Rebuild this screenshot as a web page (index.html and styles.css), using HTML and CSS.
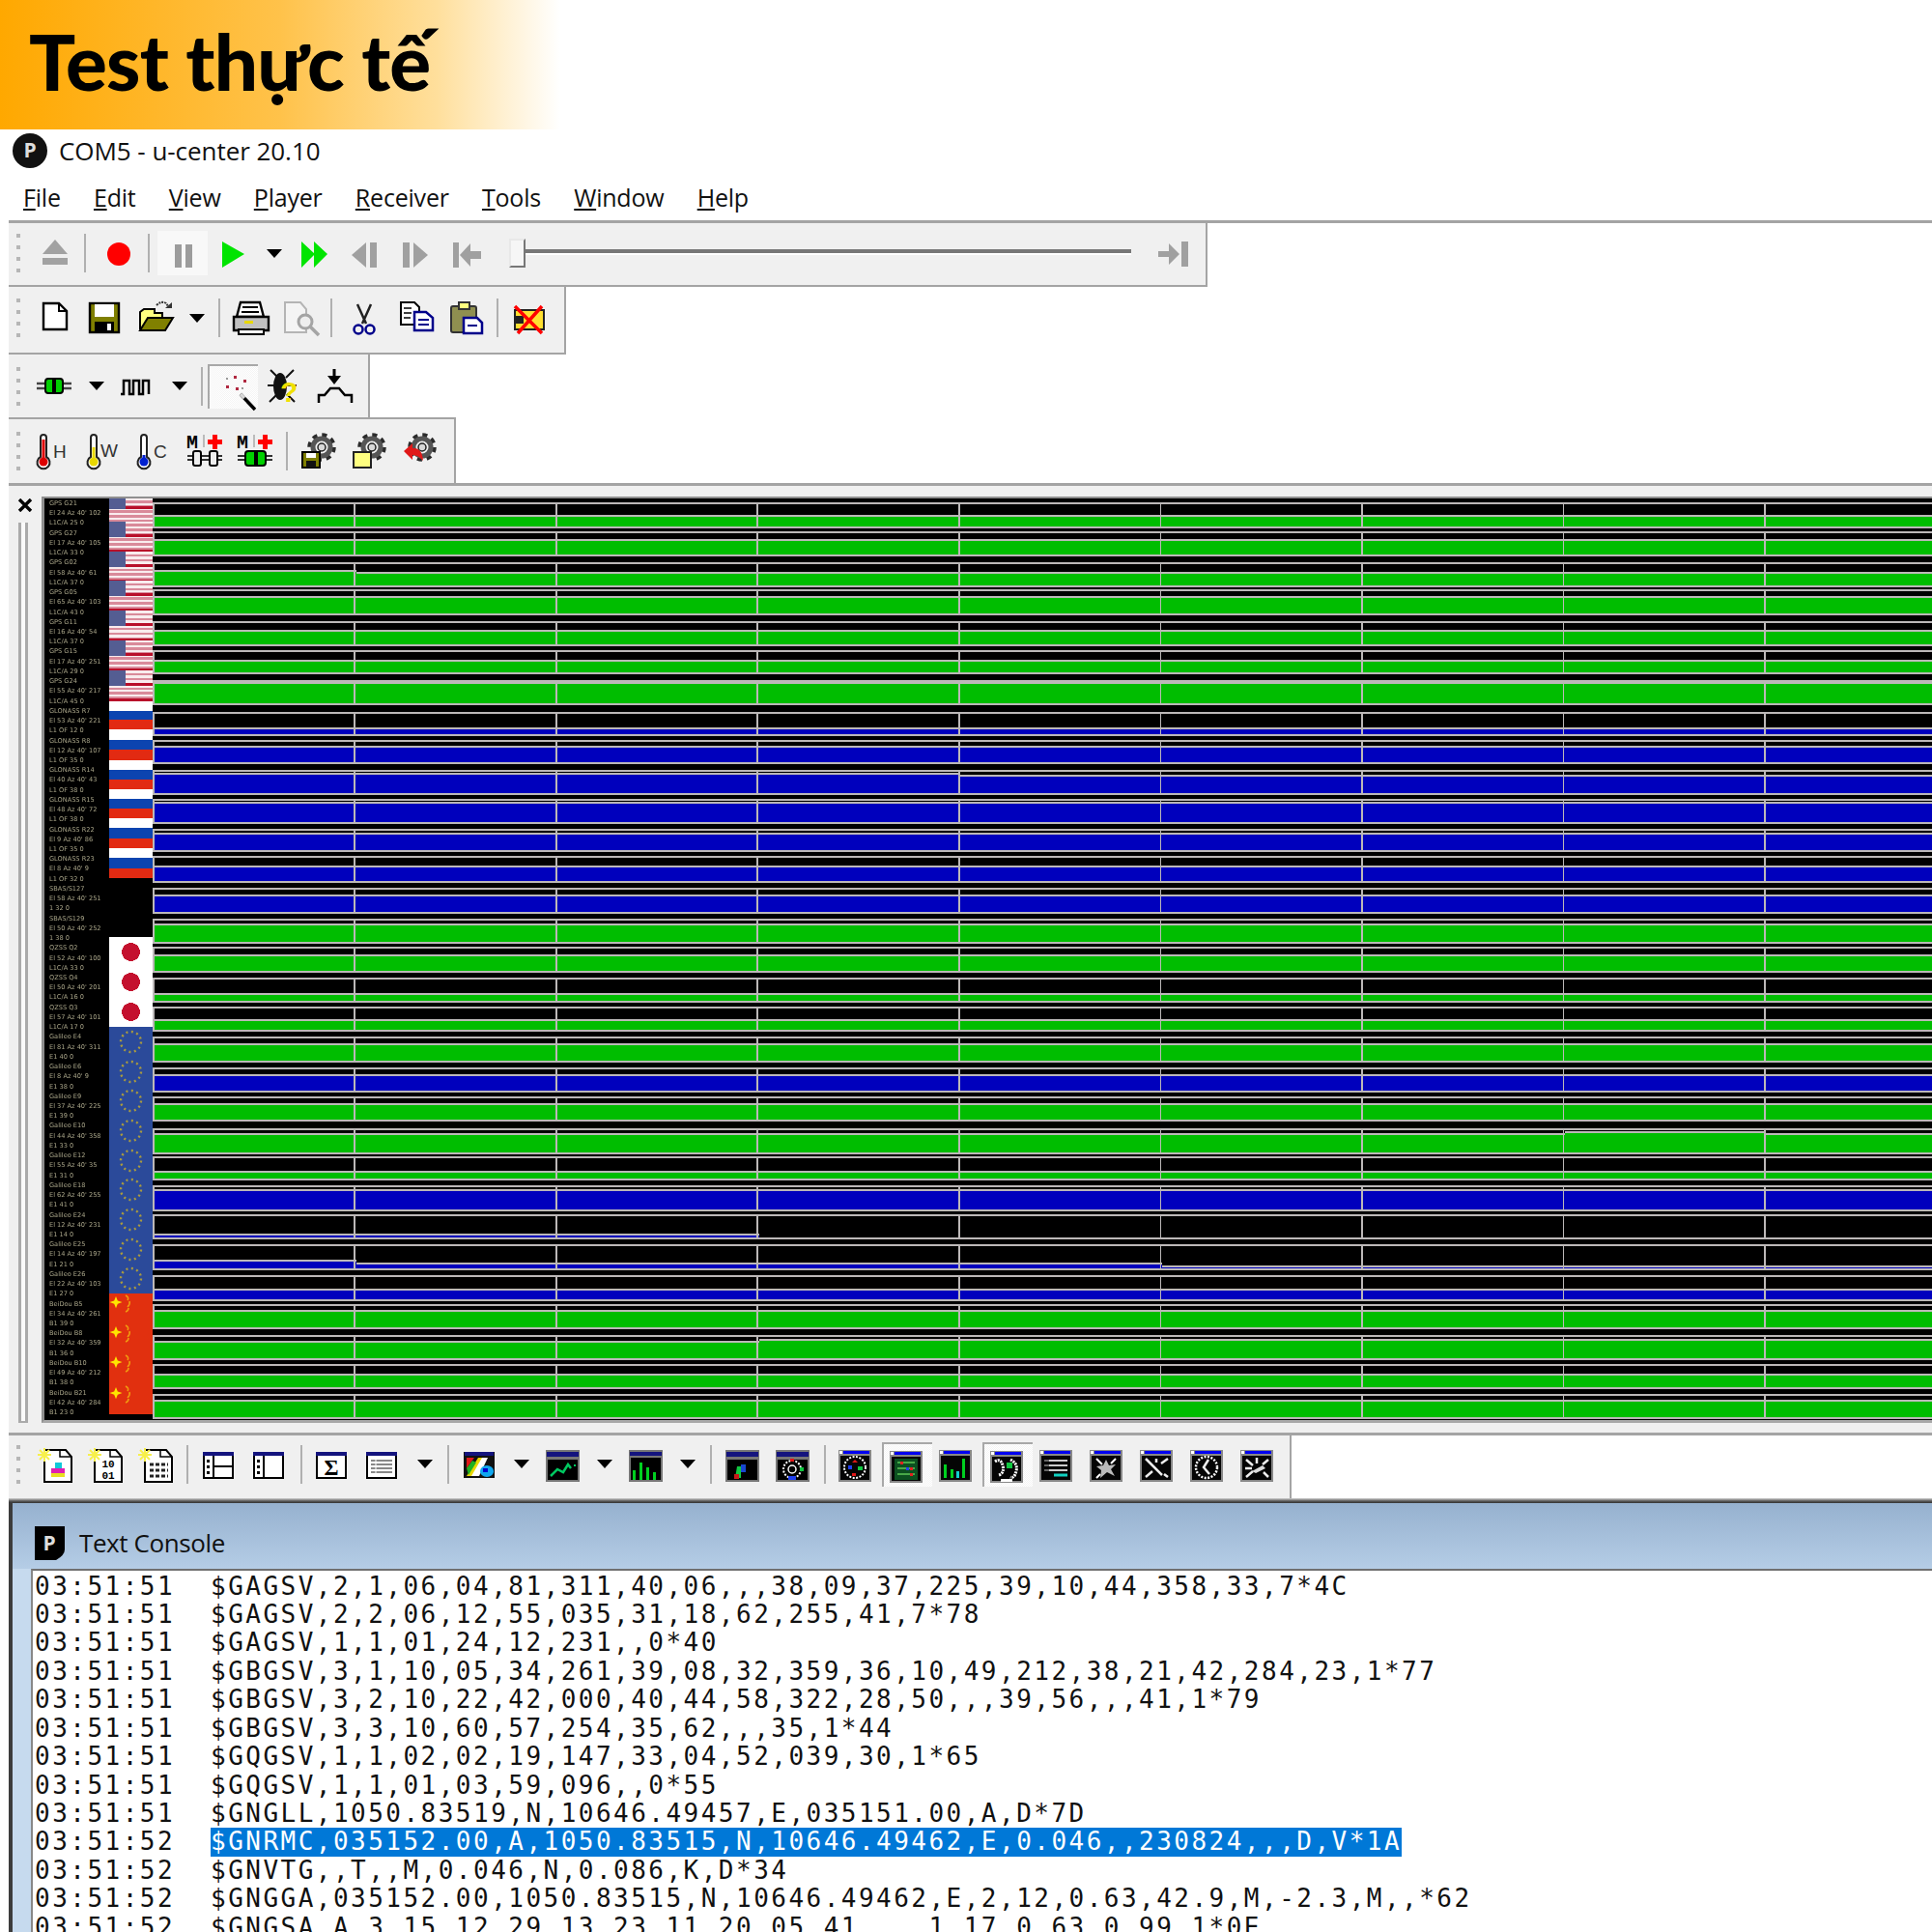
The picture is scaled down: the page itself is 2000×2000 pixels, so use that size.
FILE: index.html
```html
<!DOCTYPE html>
<html lang="vi">
<head>
<meta charset="utf-8">
<title>Test thực tế</title>
<link rel="stylesheet" href="styles.css">
</head>
<body>
<svg class="defs" aria-hidden="true">
  <defs>
    <symbol id="gear" viewBox="-16 -16 32 32" overflow="visible">
      <circle r="12.5" fill="none" stroke="#2b2b2b" stroke-width="4.5" stroke-dasharray="5 4.8"/>
      <circle r="9" fill="none" stroke="#555" stroke-width="5"/>
      <circle r="4" fill="#d8d8d8" stroke="#222" stroke-width="1.5"/>
    </symbol>
    <symbol id="spark" viewBox="0 0 52 52" overflow="visible">
      <path d="M15 11L37 11 43 18V44H15Z" fill="#fff" stroke="#000" stroke-width="2"/>
      <path d="M31 11v7h12" fill="none" stroke="#000" stroke-width="1.5"/>
      <path d="M8 16h14M15 9v14M10 11l10 10M20 11L10 21" stroke="#f7f04a" stroke-width="2"/>
    </symbol>
    <symbol id="navy" viewBox="0 0 52 52" overflow="visible">
      <rect x="8" y="11" width="35" height="33" fill="#777"/>
      <rect x="9" y="13" width="33" height="5" fill="#14147e"/>
      <rect x="10" y="21" width="31" height="21" fill="#000"/>
    </symbol>
    <symbol id="blue" viewBox="0 0 52 52" overflow="visible">
      <rect x="7" y="11" width="34" height="33" fill="#888"/>
      <rect x="8" y="12" width="3" height="3" fill="#fff"/>
      <rect x="12" y="12" width="27" height="3" fill="#0000f0"/>
      <rect x="9" y="17" width="30" height="25" fill="#050505"/>
    </symbol>
    <symbol id="eu" viewBox="0 0 45 31">
      <circle cx="22.5" cy="15.5" r="10.5" fill="none" stroke="#a89a40" stroke-width="2.4" stroke-dasharray="2 3.5"/>
    </symbol>
    <symbol id="cn" viewBox="0 0 45 31">
      <path d="M7 3l1.8 4.6L13.500 9 8.800 10.700 7 15.300 5.200 10.700 .5 9 5.200 7.600z" fill="#ffe600"/>
      <path d="M17 2q4 2 2 5M21 8q1 3-2 6M20 15q0 3-3 4" fill="none" stroke="#f09a10" stroke-width="1.600"/>
    </symbol>
  </defs>
</svg>

<div class="page">
  <header class="banner"><h1>Test thực tế</h1></header>

  <div class="titlebar">
    <svg class="app-logo" viewBox="0 0 36 36"><circle cx="18" cy="18" r="18" fill="#111"/><text x="18" y="25" class="logo-p">P</text></svg>
    <span>COM5 - u-center 20.10</span>
  </div>

  <nav class="menu">
    <span><u>F</u>ile</span><span><u>E</u>dit</span><span><u>V</u>iew</span><span><u>P</u>layer</span><span><u>R</u>eceiver</span><span><u>T</u>ools</span><span><u>W</u>indow</span><span><u>H</u>elp</span>
  </nav>
  <div class="rule"></div>

  <!-- player toolbar -->
  <div class="bar t1">
    <i class="grip"></i>
    <span class="btn"><svg viewBox="0 0 52 52"><path d="M26 12L39 27H13Z" fill="#a2a2a2"/><rect x="13" y="31" width="26" height="7" fill="#a2a2a2"/></svg></span>
    <i class="sep"></i>
    <span class="btn"><svg viewBox="0 0 52 52"><circle cx="26" cy="27" r="12" fill="#f00"/></svg></span>
    <i class="sep"></i>
    <span class="btn soft"><svg viewBox="0 0 52 52"><rect x="18" y="17" width="7" height="24" fill="#9c9c9c"/><rect x="29" y="17" width="7" height="24" fill="#9c9c9c"/></svg></span>
    <span class="btn"><svg viewBox="0 0 52 52"><path d="M15 14L38 27 15 41Z" fill="#00e400"/></svg></span>
    <i class="drop"></i>
    <span class="btn"><svg viewBox="0 0 52 52"><path d="M11 14L25 27 11 41ZM24 14L38 27 24 41Z" fill="#00e400"/></svg></span>
    <span class="btn"><svg viewBox="0 0 52 52"><path d="M26 15L11 28 26 41Z" fill="#a0a0a0"/><rect x="30" y="15" width="7" height="26" fill="#a0a0a0"/></svg></span>
    <span class="btn"><svg viewBox="0 0 52 52"><rect x="12" y="15" width="7" height="26" fill="#a0a0a0"/><path d="M23 15L38 28 23 41Z" fill="#a0a0a0"/></svg></span>
    <span class="btn"><svg viewBox="0 0 52 52"><rect x="12" y="15" width="6" height="26" fill="#a0a0a0"/><path d="M19 28L30 16V24H41V32H30V40Z" fill="#a0a0a0"/></svg></span>
    <div class="slider"><i class="thumb"></i><i class="track"></i></div>
    <span class="btn"><svg viewBox="0 0 52 52"><path d="M11 24H22V16L33 27 22 38V30H11Z" fill="#a0a0a0"/><rect x="35" y="14" width="7" height="26" fill="#a0a0a0"/></svg></span>
  </div>

  <!-- file toolbar -->
  <div class="bar t2">
    <i class="grip"></i>
    <span class="btn"><svg viewBox="0 0 52 52"><path d="M14 11H30L38 19V38H14Z" fill="#fff" stroke="#000" stroke-width="2.400"/><path d="M30 11V19H38" fill="none" stroke="#000" stroke-width="2"/></svg></span>
    <span class="btn"><svg viewBox="0 0 52 52"><rect x="10" y="11" width="30" height="30" fill="#7f7f00" stroke="#000" stroke-width="2.400"/><rect x="15" y="12" width="20" height="13" fill="#fff"/><rect x="15" y="30" width="20" height="11" fill="#000"/><rect x="28" y="32" width="4" height="7" fill="#fff"/></svg></span>
    <span class="btn"><svg viewBox="0 0 52 52"><path d="M10 38V20L14 17H25V21H33V27" fill="#ffff80" stroke="#000" stroke-width="2"/><path d="M10 39L18 26H44L36 39Z" fill="#808000" stroke="#000" stroke-width="2"/><path d="M27 13Q32 8 37 11L39 14" fill="none" stroke="#333" stroke-width="2" stroke-dasharray="2 1"/><path d="M36 16H43V10Z" fill="#333"/></svg></span>
    <i class="drop"></i>
    <i class="sep"></i>
    <span class="btn"><svg viewBox="0 0 52 52"><path d="M16 10H36L40 25H12Z" fill="#fff" stroke="#000" stroke-width="2.400"/><path d="M18 15H34M17 20H35" stroke="#000" stroke-width="2"/><path d="M9 25H45V39H9Z" fill="#c0c0c0" stroke="#000" stroke-width="2.400"/><rect x="14" y="38" width="26" height="5" fill="#fff" stroke="#000" stroke-width="2"/><rect x="20" y="29" width="9" height="3" fill="#e8d800"/></svg></span>
    <span class="btn"><svg viewBox="0 0 52 52"><path d="M10 10H26L32 17V41H10Z" fill="#f4f4f4" stroke="#b4b4b4" stroke-width="2"/><circle cx="31" cy="30" r="7" fill="#eee" stroke="#a4a4a4" stroke-width="3"/><path d="M36 35L45 44" stroke="#a4a4a4" stroke-width="3.500"/></svg></span>
    <i class="sep"></i>
    <span class="btn wide"><svg viewBox="0 0 52 52"><path d="M19 12L28 32M33 12L24 32" stroke="#222" stroke-width="2.500"/><circle cx="20" cy="38" r="4.500" fill="none" stroke="#00008a" stroke-width="2.500"/><circle cx="32" cy="38" r="4.500" fill="none" stroke="#00008a" stroke-width="2.500"/></svg></span>
    <span class="btn"><svg viewBox="0 0 52 52"><path d="M10 10H24L29 15V33H10Z" fill="#fff" stroke="#000" stroke-width="2"/><path d="M13 16H21M13 21H21M13 26H20" stroke="#000" stroke-width="1.500"/><path d="M24 20H36L43 26V39H24Z" fill="#fff" stroke="#00008a" stroke-width="2.500"/><path d="M28 28H39M28 33H39" stroke="#00008a" stroke-width="2"/></svg></span>
    <span class="btn"><svg viewBox="0 0 52 52"><rect x="10" y="14" width="26" height="27" rx="2" fill="#8f8f50" stroke="#333" stroke-width="2"/><rect x="18" y="10" width="11" height="7" fill="#ffff80" stroke="#333" stroke-width="2"/><path d="M23 26H37L42 31V42H23Z" fill="#fff" stroke="#00008a" stroke-width="2.500"/><path d="M27 34H37" stroke="#00008a" stroke-width="2"/></svg></span>
    <i class="sep"></i>
    <span class="btn"><svg viewBox="0 0 52 52"><rect x="12" y="18" width="30" height="20" fill="#ffe030" stroke="#222" stroke-width="2"/><rect x="12" y="24" width="9" height="8" fill="#222"/><path d="M12 14L40 42M40 14L15 42" stroke="#f00" stroke-width="3.500"/></svg></span>
  </div>

  <!-- connection toolbar -->
  <div class="bar t3">
    <i class="grip"></i>
    <span class="btn"><svg viewBox="0 0 52 52"><path d="M7 23H43M7 28H43" stroke="#444" stroke-width="2.500"/><rect x="16" y="18" width="18" height="15" rx="3" fill="#00d000" stroke="#000" stroke-width="2"/><rect x="23" y="18" width="4" height="15"/></svg></span>
    <i class="drop"></i>
    <span class="btn"><svg viewBox="0 0 52 52"><path d="M8 34H11V20H17V34H21V20H27V34H31V20H37V34" fill="none" stroke="#000" stroke-width="2.500"/></svg></span>
    <i class="drop"></i>
    <i class="sep"></i>
    <span class="btn on"><svg viewBox="0 0 52 52"><path d="M33 33L48 49" stroke="#000" stroke-width="3.500"/><path d="M33 33L37 37" stroke="#d8d8d8" stroke-width="3.500"/><path d="M26 14h3v3h-3zM36 18h3v3h-3zM18 24h3v3h-3zM28 26h3v3h-3z" fill="#b02840"/><path d="M18 16h2v2h-2zM34 26h2v2h-2z" fill="#999"/></svg></span>
    <span class="btn"><svg viewBox="0 0 52 52"><path d="M13 9L21 17M37 9L29 17M10 25H40M12 42L20 34M38 42L30 34" stroke="#111" stroke-width="2"/><ellipse cx="23" cy="26" rx="7" ry="14" fill="#111"/><text x="23" y="42" class="bug-q">?</text></svg></span>
    <span class="btn"><svg viewBox="0 0 52 52"><path d="M27 8V18" stroke="#000" stroke-width="3"/><path d="M20 15L27 24 34 15Z"/><path d="M11 43V35H17L23 28H32L38 35H45V43" fill="none" stroke="#000" stroke-width="2.500"/></svg></span>
  </div>

  <!-- monitor toolbar -->
  <div class="bar t4">
    <i class="grip"></i>
    <span class="btn"><svg viewBox="0 0 52 52"><path d="M11 12A3 3 0 0 1 17 12V32A6.500 6.500 0 1 1 11 32Z" fill="#fff" stroke="#222" stroke-width="2"/><rect x="12.500" y="14" width="3" height="20" fill="#d00"/><circle cx="14" cy="37" r="4.500" fill="#d00"/><text x="24" y="33" class="th">H</text></svg></span>
    <span class="btn"><svg viewBox="0 0 52 52"><path d="M11 12A3 3 0 0 1 17 12V32A6.500 6.500 0 1 1 11 32Z" fill="#fff" stroke="#222" stroke-width="2"/><rect x="12.500" y="22" width="3" height="12" fill="#e8d800"/><circle cx="14" cy="37" r="4.500" fill="#e8d800"/><text x="21" y="32" class="th">W</text></svg></span>
    <span class="btn"><svg viewBox="0 0 52 52"><path d="M11 12A3 3 0 0 1 17 12V32A6.500 6.500 0 1 1 11 32Z" fill="#fff" stroke="#222" stroke-width="2"/><rect x="12.500" y="30" width="3" height="4" fill="#0020d0"/><circle cx="14" cy="37" r="4.500" fill="#0020d0"/><text x="24" y="33" class="th">C</text></svg></span>
    <span class="btn"><svg viewBox="0 0 52 52"><text x="6" y="23" class="mm">M</text><path d="M24 9V22" stroke="#aaa" stroke-width="1.500"/><path d="M33 9h5v5h5v5h-5v5h-5v-5h-5v-5h5z" fill="#f00"/><path d="M7 31H43M7 35H43" stroke="#333" stroke-width="2"/><rect x="13" y="26" width="8" height="15" rx="2" fill="#eee" stroke="#000" stroke-width="2"/><rect x="30" y="26" width="8" height="15" rx="2" fill="#eee" stroke="#000" stroke-width="2"/></svg></span>
    <span class="btn"><svg viewBox="0 0 52 52"><text x="6" y="23" class="mm">M</text><path d="M24 9V22" stroke="#aaa" stroke-width="1.500"/><path d="M33 9h5v5h5v5h-5v5h-5v-5h-5v-5h5z" fill="#f00"/><path d="M7 31H43M7 35H43" stroke="#333" stroke-width="2"/><rect x="15" y="26" width="21" height="15" rx="3" fill="#00d000" stroke="#000" stroke-width="2"/><rect x="24" y="26" width="4" height="15"/></svg></span>
    <i class="sep"></i>
    <span class="btn"><svg viewBox="0 0 52 52"><use href="#gear" x="14" y="6" width="32" height="32"/><rect x="10" y="27" width="18" height="16" fill="#7f7f00" stroke="#000" stroke-width="2"/><rect x="14" y="36" width="10" height="7" fill="#111"/><rect x="14" y="28" width="10" height="5" fill="#fff"/></svg></span>
    <span class="btn"><svg viewBox="0 0 52 52"><use href="#gear" x="14" y="6" width="32" height="32"/><rect x="11" y="27" width="18" height="16" fill="#ffff80" stroke="#222" stroke-width="2"/></svg></span>
    <span class="btn"><svg viewBox="0 0 52 52"><use href="#gear" x="14" y="6" width="32" height="32"/><path d="M11 26L20 18V23Q30 22 31 36Q26 30 20 30V35Z" fill="#e01818"/></svg></span>
  </div>
  <div class="rule"></div>

  <!-- satellite chart -->
  <section class="chart-pane">
    <div class="pane-side">
      <svg class="close-x" viewBox="0 0 16 14"><path d="M2 1L14 13M14 1L2 13" stroke="#000" stroke-width="3.400"/></svg>
      <div class="pane-handle"></div>
    </div>
    <div class="chart">
      <div class="labels">
        <div class="lb"><p>GPS G21</p><p>El 24 Az 40' 102</p><p>L1C/A 25 0</p></div>
        <div class="lb"><p>GPS G27</p><p>El 17 Az 40' 105</p><p>L1C/A 33 0</p></div>
        <div class="lb"><p>GPS G02</p><p>El 58 Az 40' 61</p><p>L1C/A 37 0</p></div>
        <div class="lb"><p>GPS G05</p><p>El 65 Az 40' 103</p><p>L1C/A 43 0</p></div>
        <div class="lb"><p>GPS G11</p><p>El 16 Az 40' 54</p><p>L1C/A 37 0</p></div>
        <div class="lb"><p>GPS G15</p><p>El 17 Az 40' 251</p><p>L1C/A 29 0</p></div>
        <div class="lb"><p>GPS G24</p><p>El 55 Az 40' 217</p><p>L1C/A 45 0</p></div>
        <div class="lb"><p>GLONASS R7</p><p>El 53 Az 40' 221</p><p>L1 OF 12 0</p></div>
        <div class="lb"><p>GLONASS R8</p><p>El 12 Az 40' 107</p><p>L1 OF 35 0</p></div>
        <div class="lb"><p>GLONASS R14</p><p>El 40 Az 40' 43</p><p>L1 OF 38 0</p></div>
        <div class="lb"><p>GLONASS R15</p><p>El 48 Az 40' 72</p><p>L1 OF 38 0</p></div>
        <div class="lb"><p>GLONASS R22</p><p>El 9 Az 40' 86</p><p>L1 OF 35 0</p></div>
        <div class="lb"><p>GLONASS R23</p><p>El 8 Az 40' 9</p><p>L1 OF 32 0</p></div>
        <div class="lb"><p>SBAS/S127</p><p>El 58 Az 40' 251</p><p>1 32 0</p></div>
        <div class="lb"><p>SBAS/S129</p><p>El 50 Az 40' 252</p><p>1 38 0</p></div>
        <div class="lb"><p>QZSS Q2</p><p>El 52 Az 40' 100</p><p>L1C/A 33 0</p></div>
        <div class="lb"><p>QZSS Q4</p><p>El 50 Az 40' 201</p><p>L1C/A 16 0</p></div>
        <div class="lb"><p>QZSS Q3</p><p>El 57 Az 40' 101</p><p>L1C/A 17 0</p></div>
        <div class="lb"><p>Galileo E4</p><p>El 81 Az 40' 311</p><p>E1 40 0</p></div>
        <div class="lb"><p>Galileo E6</p><p>El 8 Az 40' 9</p><p>E1 38 0</p></div>
        <div class="lb"><p>Galileo E9</p><p>El 37 Az 40' 225</p><p>E1 39 0</p></div>
        <div class="lb"><p>Galileo E10</p><p>El 44 Az 40' 358</p><p>E1 33 0</p></div>
        <div class="lb"><p>Galileo E12</p><p>El 55 Az 40' 35</p><p>E1 31 0</p></div>
        <div class="lb"><p>Galileo E18</p><p>El 62 Az 40' 255</p><p>E1 41 0</p></div>
        <div class="lb"><p>Galileo E24</p><p>El 12 Az 40' 231</p><p>E1 14 0</p></div>
        <div class="lb"><p>Galileo E25</p><p>El 14 Az 40' 197</p><p>E1 21 0</p></div>
        <div class="lb"><p>Galileo E26</p><p>El 22 Az 40' 103</p><p>E1 27 0</p></div>
        <div class="lb"><p>BeiDou B5</p><p>El 34 Az 40' 261</p><p>B1 39 0</p></div>
        <div class="lb"><p>BeiDou B8</p><p>El 32 Az 40' 359</p><p>B1 36 0</p></div>
        <div class="lb"><p>BeiDou B10</p><p>El 49 Az 40' 212</p><p>B1 38 0</p></div>
        <div class="lb"><p>BeiDou B21</p><p>El 42 Az 40' 284</p><p>B1 23 0</p></div>
      </div>

      <div class="flags">
        <div class="fl us us-first" style="height:24px"></div>
        <div class="fl us" style="height:31px"></div>
        <div class="fl us" style="height:30px"></div>
        <div class="fl us" style="height:31px"></div>
        <div class="fl us" style="height:31px"></div>
        <div class="fl us" style="height:31px"></div>
        <div class="fl us" style="height:32px"></div>
        <div class="fl ru" style="height:29px"></div>
        <div class="fl ru" style="height:32px"></div>
        <div class="fl ru" style="height:30px"></div>
        <div class="fl ru" style="height:30px"></div>
        <div class="fl ru" style="height:31px"></div>
        <div class="fl ru" style="height:31px"></div>
        <div class="fl" style="height:61px"></div>
        <div class="fl jp" style="height:31px"></div>
        <div class="fl jp" style="height:31px"></div>
        <div class="fl jp" style="height:31px"></div>
        <div class="fl eu"><svg><use href="#eu"/></svg></div>
        <div class="fl eu"><svg><use href="#eu"/></svg></div>
        <div class="fl eu"><svg><use href="#eu"/></svg></div>
        <div class="fl eu"><svg><use href="#eu"/></svg></div>
        <div class="fl eu"><svg><use href="#eu"/></svg></div>
        <div class="fl eu"><svg><use href="#eu"/></svg></div>
        <div class="fl eu"><svg><use href="#eu"/></svg></div>
        <div class="fl eu"><svg><use href="#eu"/></svg></div>
        <div class="fl eu"><svg><use href="#eu"/></svg></div>
        <div class="fl cn"><svg><use href="#cn"/></svg></div>
        <div class="fl cn"><svg><use href="#cn"/></svg></div>
        <div class="fl cn"><svg><use href="#cn"/></svg></div>
        <div class="fl cn"><svg><use href="#cn"/></svg></div>
      </div>

      <div class="bars">
        <div class="sv" style="margin-top:4px;height:27px"><b class="run g" style="--s:11px"></b></div>
        <div class="sv" style="margin-top:3px;height:26px"><b class="run g" style="--s:6px"></b></div>
        <div class="sv" style="margin-top:6px;height:26px"><b class="run g" style="--s:6px"></b><b class="run g" style="--s:8px"></b></div>
        <div class="sv" style="margin-top:2px;height:27px"><b class="run g" style="--s:5px"></b></div>
        <div class="sv" style="margin-top:6px;height:26px"><b class="run g" style="--s:7px"></b></div>
        <div class="sv" style="margin-top:4px;height:25px"><b class="run g" style="--s:8px"></b></div>
        <div class="sv" style="margin-top:6px;height:26px"><b class="run g" style="--s:0px"></b></div>
        <div class="sv" style="margin-top:7px;height:25px"><b class="run b" style="--s:14px"></b></div>
        <div class="sv" style="margin-top:4px;height:25px"><b class="run b" style="--s:4px"></b></div>
        <div class="sv" style="margin-top:6px;height:26px"><b class="run b" style="--n:4;--s:1px"></b><b class="run b" style="--s:3px"></b></div>
        <div class="sv" style="margin-top:4px;height:26px"><b class="run b" style="--s:1px"></b></div>
        <div class="sv" style="margin-top:5px;height:24px"><b class="run b" style="--s:2px"></b></div>
        <div class="sv" style="margin-top:4px;height:28px"><b class="run b" style="--s:8px"></b></div>
        <div class="sv" style="margin-top:5px;height:27px"><b class="run b" style="--s:5px"></b></div>
        <div class="sv" style="margin-top:5px;height:26px"><b class="run g" style="--s:3px"></b></div>
        <div class="sv" style="margin-top:3px;height:27px"><b class="run g" style="--s:6px"></b></div>
        <div class="sv" style="margin-top:5px;height:26px"><b class="run g" style="--s:14px"></b></div>
        <div class="sv" style="margin-top:4px;height:26px"><b class="run g" style="--s:11px"></b></div>
        <div class="sv" style="margin-top:5px;height:27px"><b class="run g" style="--s:5px"></b></div>
        <div class="sv" style="margin-top:5px;height:26px"><b class="run b" style="--s:5px"></b></div>
        <div class="sv" style="margin-top:4px;height:26px"><b class="run g" style="--s:5px"></b></div>
        <div class="sv" style="margin-top:7px;height:27px"><b class="run g" style="--n:7;--s:3px"></b><b class="run g" style="--s:1px"></b><b class="run g" style="--s:3px"></b></div>
        <div class="sv" style="margin-top:2px;height:25px"><b class="run g" style="--s:13px"></b></div>
        <div class="sv" style="margin-top:5px;height:27px"><b class="run b" style="--s:2px"></b></div>
        <div class="sv" style="margin-top:3px;height:26px"><b class="run b" style="--n:3;--s:18px"></b><b class="run k"></b></div>
        <div class="sv" style="margin-top:5px;height:27px"><b class="run b" style="--s:14px"></b><b class="run b" style="--n:4;--s:17px"></b><b class="run b" style="--s:20px"></b></div>
        <div class="sv" style="margin-top:5px;height:27px"><b class="run b" style="--s:12px"></b></div>
        <div class="sv" style="margin-top:3px;height:26px"><b class="run g" style="--s:4px"></b></div>
        <div class="sv" style="margin-top:6px;height:26px"><b class="run g" style="--n:3;--s:4px"></b><b class="run g" style="--s:2px"></b></div>
        <div class="sv" style="margin-top:4px;height:26px"><b class="run g" style="--s:8px"></b></div>
        <div class="sv" style="margin-top:5px;height:26px"><b class="run g" style="--s:4px"></b></div>
      </div>
    </div>
  </section>
  <div class="rule"></div>

  <!-- views toolbar -->
  <div class="bar t5">
    <i class="grip"></i>
    <span class="btn"><svg viewBox="0 0 52 52"><use href="#spark"/><rect x="22" y="30" width="14" height="5" fill="#e020b0"/><rect x="26" y="24" width="7" height="6" fill="#10c8d8"/><rect x="22" y="35" width="14" height="4" fill="#e8e020"/></svg></span>
    <span class="btn"><svg viewBox="0 0 52 52"><use href="#spark"/><text x="29" y="29" class="bits">10</text><text x="29" y="41" class="bits">01</text></svg></span>
    <span class="btn"><svg viewBox="0 0 52 52"><use href="#spark"/><path d="M20 26H39M20 32H39M20 38H39" stroke="#222" stroke-width="3" stroke-dasharray="4 2"/></svg></span>
    <i class="sep"></i>
    <span class="btn"><svg viewBox="0 0 52 52"><rect x="10" y="14" width="30" height="26" fill="#fff" stroke="#000" stroke-width="2"/><rect x="9" y="13" width="32" height="4" fill="#14147e"/><path d="M20 17V40M20 28H40" stroke="#000" stroke-width="2"/><path d="M13 21h3v3h-3zM13 27h3v3h-3zM13 33h3v3h-3z"/></svg></span>
    <span class="btn"><svg viewBox="0 0 52 52"><rect x="10" y="14" width="30" height="26" fill="#fff" stroke="#000" stroke-width="2"/><rect x="9" y="13" width="32" height="4" fill="#14147e"/><path d="M20 17V40" stroke="#000" stroke-width="2"/><path d="M13 21h3v3h-3zM13 27h3v3h-3zM13 33h3v3h-3z"/></svg></span>
    <i class="sep"></i>
    <span class="btn"><svg viewBox="0 0 52 52"><rect x="9" y="14" width="30" height="26" fill="#fff" stroke="#000" stroke-width="2"/><rect x="8" y="13" width="32" height="4" fill="#14147e"/><text x="24" y="37" class="sigma">Σ</text></svg></span>
    <span class="btn"><svg viewBox="0 0 52 52"><rect x="9" y="14" width="30" height="26" fill="#fff" stroke="#000" stroke-width="2"/><rect x="8" y="13" width="32" height="4" fill="#14147e"/><path d="M13 22H35M13 26H35M13 30H35M13 34H35" stroke="#888" stroke-width="2"/><path d="M18 20V37" stroke="#fff"/></svg></span>
    <i class="drop"></i>
    <i class="sep"></i>
    <span class="btn"><svg viewBox="0 0 52 52"><rect x="9" y="13" width="32" height="27" fill="#111"/><rect x="10" y="13" width="30" height="4" fill="#14147e"/><path d="M12 38L24 19H31L18 38Z" fill="#e8d800"/><path d="M17 38L28 19H34L25 38Z" fill="#fff"/><path d="M12 30L20 19H12Z" fill="#e01818"/><ellipse cx="33" cy="33" rx="7" ry="6" fill="#10a8f0"/><path d="M12 30L18 22 22 24 14 37Z" fill="#20b020"/><path d="M29 30h5v4h-5z" fill="#0000d0"/></svg></span>
    <i class="drop"></i>
    <span class="btn"><svg viewBox="0 0 52 52"><use href="#navy"/><path d="M13 38L20 31 26 34 31 26 34 30" fill="none" stroke="#00c860" stroke-width="2.500"/><path d="M37 26h2v2h-2z" fill="#00c860"/></svg></span>
    <i class="drop"></i>
    <span class="btn"><svg viewBox="0 0 52 52"><rect x="8" y="11" width="35" height="33" fill="#777"/><rect x="9" y="13" width="33" height="4" fill="#14147e"/><rect x="10" y="19" width="31" height="23" fill="#000"/><path d="M12 32h3v10h-3zM19 24h3v18h-3zM26 29h3v13h-3zM33 34h3v8h-3z" fill="#00d020"/></svg></span>
    <i class="drop"></i>
    <i class="sep"></i>
    <span class="btn"><svg viewBox="0 0 52 52"><use href="#navy"/><path d="M20 28h8v6h-4v6h-6z" fill="#10c840"/><path d="M24 26h5v8h-5z" fill="#1848d0"/><path d="M17 36h5v5h-5z" fill="#c81818"/></svg></span>
    <span class="btn"><svg viewBox="0 0 52 52"><use href="#navy"/><circle cx="25" cy="31" r="9" fill="none" stroke="#fff" stroke-width="2" stroke-dasharray="2 1.500"/><circle cx="25" cy="31" r="4" fill="none" stroke="#fff" stroke-width="1.500"/><path d="M23 20h4v3h-4z" fill="#e01818"/><path d="M33 29h4v4h-4z" fill="#10c840"/><path d="M21 38h8v4h-8z" fill="#2040f0"/></svg></span>
    <i class="sep"></i>
    <span class="btn"><svg viewBox="0 0 52 52"><use href="#blue"/><circle cx="24" cy="29" r="11" fill="none" stroke="#fff" stroke-width="2" stroke-dasharray="2 1.500"/><path d="M24 21l3 3h-6z" fill="#e01818"/><path d="M17 27h4v4h-4z" fill="#2040f0"/><path d="M27 28h5v4h-5z" fill="#10c840"/><path d="M21 35h4v3h-4z" fill="#e01818"/></svg></span>
    <span class="btn on"><svg viewBox="0 0 52 52"><use href="#blue"/><rect x="12" y="19" width="24" height="22" fill="#0c5020"/><path d="M15 22h18v2H15zM15 28h18v2H15zM15 34h18v2H15z" fill="#48a848"/><path d="M18 22h3v3h-3zM28 28h3v3h-3zM28 34h3v3h-3z" fill="#e02020"/><path d="M24 28h3v3h-3z" fill="#2040f0"/></svg></span>
    <span class="btn"><svg viewBox="0 0 52 52"><use href="#blue"/><path d="M12 26h3v14h-3zM19 31h3v9h-3zM31 20h3v20h-3z" fill="#00d020"/><path d="M25 33h3v7h-3z" fill="#10d0d0"/></svg></span>
    <span class="btn on"><svg viewBox="0 0 52 52"><use href="#blue"/><path d="M12 22Q18 18 20 26T16 36M28 20Q36 24 34 32T28 38" fill="none" stroke="#fff" stroke-width="3" stroke-dasharray="2 1"/><path d="M24 23h6v6h-6z" fill="#10c840"/><path d="M18 40h12v3H18z" fill="#fff"/></svg></span>
    <span class="btn"><svg viewBox="0 0 52 52"><use href="#blue"/><path d="M12 22H36M12 27H36M12 32H36" stroke="#ccc" stroke-width="2"/><path d="M12 22H17M12 27H17M12 32H17" stroke="#666" stroke-width="2"/><path d="M22 37H36" stroke="#10d0c0" stroke-width="3"/></svg></span>
    <span class="btn"><svg viewBox="0 0 52 52"><use href="#blue"/><path d="M24 21L27 27 34 26 29 31 33 38 25 34 18 40 19 32 14 28 21 27Z" fill="#bbb"/><path d="M14 20L20 26M34 20L29 25M14 40L18 36" stroke="#fff" stroke-width="2"/></svg></span>
    <span class="btn"><svg viewBox="0 0 52 52"><use href="#blue"/><path d="M13 20L20 27M36 20L29 25M24 20V24M20 27L30 37M13 39L20 33M36 39L32 36" stroke="#eee" stroke-width="2.500"/></svg></span>
    <span class="btn"><svg viewBox="0 0 52 52"><use href="#blue"/><circle cx="24" cy="29" r="11" fill="none" stroke="#fff" stroke-width="2.500" stroke-dasharray="2 1.500"/><path d="M26 21L21 29 27 36" fill="none" stroke="#eee" stroke-width="2.500"/></svg></span>
    <span class="btn"><svg viewBox="0 0 52 52"><use href="#blue"/><path d="M13 21L20 27M24 19V25M36 21L30 26M12 30H19M13 39L20 33M36 39L31 34" stroke="#eee" stroke-width="2.500"/><path d="M19 33L30 27 33 30 23 35Z" fill="#ddd"/></svg></span>
  </div>
  <div class="rule-dark"></div>

  <!-- text console -->
  <section class="console">
    <div class="console-title">
      <svg class="tag" viewBox="0 0 31 35"><path d="M0 0H31V24Q31 30 22 35H0Z" fill="#000"/><text x="15" y="25" class="tag-p">P</text></svg>
      <span>Text Console</span>
    </div>
    <div class="console-body">
      <div class="log">
        <div class="ln"><span class="ts">03:51:51</span><span>$GAGSV,2,1,06,04,81,311,40,06,,,38,09,37,225,39,10,44,358,33,7*4C</span></div>
        <div class="ln"><span class="ts">03:51:51</span><span>$GAGSV,2,2,06,12,55,035,31,18,62,255,41,7*78</span></div>
        <div class="ln"><span class="ts">03:51:51</span><span>$GAGSV,1,1,01,24,12,231,,0*40</span></div>
        <div class="ln"><span class="ts">03:51:51</span><span>$GBGSV,3,1,10,05,34,261,39,08,32,359,36,10,49,212,38,21,42,284,23,1*77</span></div>
        <div class="ln"><span class="ts">03:51:51</span><span>$GBGSV,3,2,10,22,42,000,40,44,58,322,28,50,,,39,56,,,41,1*79</span></div>
        <div class="ln"><span class="ts">03:51:51</span><span>$GBGSV,3,3,10,60,57,254,35,62,,,35,1*44</span></div>
        <div class="ln"><span class="ts">03:51:51</span><span>$GQGSV,1,1,02,02,19,147,33,04,52,039,30,1*65</span></div>
        <div class="ln"><span class="ts">03:51:51</span><span>$GQGSV,1,1,01,03,59,096,,0*55</span></div>
        <div class="ln"><span class="ts">03:51:51</span><span>$GNGLL,1050.83519,N,10646.49457,E,035151.00,A,D*7D</span></div>
        <div class="ln"><span class="ts">03:51:52</span><span class="sel">$GNRMC,035152.00,A,1050.83515,N,10646.49462,E,0.046,,230824,,,D,V*1A</span></div>
        <div class="ln"><span class="ts">03:51:52</span><span>$GNVTG,,T,,M,0.046,N,0.086,K,D*34</span></div>
        <div class="ln"><span class="ts">03:51:52</span><span>$GNGGA,035152.00,1050.83515,N,10646.49462,E,2,12,0.63,42.9,M,-2.3,M,,*62</span></div>
        <div class="ln"><span class="ts">03:51:52</span><span>$GNGSA,A,3,15,12,29,13,23,11,20,05,41,,,,1.17,0.63,0.99,1*0E</span></div>
      </div>
    </div>
  </section>
</div>
</body>
</html>
```

FILE: styles.css
```css
* { box-sizing: border-box; }
html, body { margin: 0; padding: 0; background: #fff; }
.defs { width: 0; height: 0; position: absolute; }
.page {
  width: 2000px; height: 2000px; overflow: hidden;
  display: flex; flex-direction: column;
  font-family: "Open Sans", "Noto Sans", sans-serif; color: #111;
}

/* banner */
.banner {
  flex: none; width: 580px; height: 134px; padding: 0 0 8px 30px;
  display: flex; align-items: center;
  background: linear-gradient(90deg, #ffa800 0%, #ffc24a 50%, #ffdf9c 78%, #fff 100%);
}
.banner h1 {
  margin: 0; font: 900 80px/1 Lato, "Noto Sans", sans-serif; color: #000;
  letter-spacing: -.8px; white-space: nowrap;
}

/* title + menu */
.titlebar {
  flex: none; height: 58px; padding: 0 0 15px 13px;
  display: flex; align-items: center; gap: 12px;
  font-size: 26px; letter-spacing: -.05px; color: #111;
}
.app-logo { width: 36px; height: 36px; flex: none; }
.logo-p { font: 700 21px "Open Sans", sans-serif; fill: #ddd; text-anchor: middle; }
.menu {
  flex: none; height: 36px; padding: 0 0 12px 24px;
  display: flex; align-items: center; gap: 34.200px;
  font-size: 25px; letter-spacing: -.2px;
}
.rule { flex: none; height: 3px; margin-left: 9px; background: #a4a4a4; }
.rule-dark { flex: none; height: 5px; margin-left: 9px; background: linear-gradient(#d0d0d0, #555 60%, #333); }

/* toolbars */
.bar {
  flex: none; margin-left: 9px; display: flex; align-items: center;
  background: #f0f0f0; border-right: 2px solid #a4a4a4;
}
.t1 { width: 1241px; height: 66px; padding: 0 8px 2px 0; border-bottom: 2px solid #a4a4a4; }
.t2 { width: 577px; height: 70px; padding-bottom: 4px; border-bottom: 2px solid #a4a4a4; }
.t3 { width: 374px; height: 65px; }
.t4 { width: 463px; height: 68px; border-top: 2px solid #a4a4a4; }
.t5 { width: 1328px; height: 65px; padding-bottom: 6px; }

.grip {
  flex: none; width: 4px; height: 40px; margin: 0 10px 0 8px;
  background: repeating-linear-gradient(#b6b6b6 0 4px, transparent 4px 12px);
}
.btn { flex: none; width: 52px; height: 46px; display: flex; align-items: center; justify-content: center; }
.btn svg { flex: none; width: 52px; height: 52px; }
.btn.wide { width: 56px; }
.btn.on {
  background: repeating-conic-gradient(#fff 0 25%, #f4f4f4 0 50%) 0 0 / 2px 2px;
  border-left: 2px solid #a8a8a8; border-top: 2px solid #a8a8a8;
}
.btn.soft { background: #f8f8f8; }
.sep { flex: none; width: 2px; height: 40px; margin: 0 5px; background: #b0b0b0; }
.t1 .sep { margin: 0 8px 0 4px; }
.t5 .sep { margin: 0 6px; }
.drop { flex: none; width: 34px; display: flex; justify-content: center; }
.drop::before {
  content: ""; width: 0; height: 0;
  border-left: 8.500px solid transparent; border-right: 8.500px solid transparent;
  border-top: 9px solid #000;
}
.slider { flex: 1; min-width: 0; display: flex; align-items: center; padding: 0 17px 0 18px; }
.thumb { flex: none; width: 17px; height: 30px; background: #f6f6f6; border: 2px solid #e8e8e8; border-right-color: #777; border-bottom-color: #777; }
.track { flex: 1; height: 6px; margin-top: -3px; background: linear-gradient(#777 60%, #fff 60%); }

.bug-q { font: 700 30px "Liberation Sans", sans-serif; fill: #f0e000; }
.th { font: 400 19px "Liberation Sans", sans-serif; fill: #333; }
.mm { font: 700 20px "Liberation Mono", monospace; fill: #000; }
.bits { font: 700 11px "Liberation Mono", monospace; fill: #000; text-anchor: middle; }
.sigma { font: 700 23px "Liberation Serif", serif; fill: #000; text-anchor: middle; }
.tag-p { font: 700 21px "Open Sans", sans-serif; fill: #ddd; text-anchor: middle; }

/* chart pane */
.chart-pane {
  flex: none; height: 980px; margin-left: 9px; padding: 11px 0 10px;
  display: flex; background: #f0f0f0;
}
.pane-side { flex: none; width: 34px; display: flex; flex-direction: column; align-items: center; padding: 2px 0 0 0; }
.close-x { width: 16px; height: 14px; flex: none; margin-right: 0; }
.pane-handle {
  flex: 1; width: 10px; margin: 11px 4px 0 0;
  border-left: 3px solid #aaa; border-right: 3px solid #aaa; background: #fafafa;
  border-bottom: 2px solid #aaa;
}
.chart {
  flex: 1; min-width: 0; display: flex; overflow: hidden; background: #000;
  border-left: 3px solid #8f8f8f; border-top: 2px solid #8f8f8f; border-bottom: 3px solid #a8a8a8;
}
.labels { flex: none; width: 67px; overflow: hidden; padding-left: 5px; }
.lb { height: 30.700px; }
.lb p {
  margin: 0; height: 10.230px; font: 400 6.600px/10.230px "DejaVu Sans", sans-serif;
  color: #a8a488; white-space: nowrap; filter: blur(.45px);
}
.flags { flex: none; width: 45px; }
.fl { width: 45px; overflow: hidden; }
.fl svg { display: block; width: 45px; height: 31px; }
.us {
  background:
    linear-gradient(#545d92, #545d92) 0 0 / 17px 16px no-repeat,
    linear-gradient(#b80f2a, #b80f2a) 0 29px / 100% 3px no-repeat,
    linear-gradient(#b80f2a, #b80f2a) 17px 13px / 100% 3px no-repeat,
    repeating-linear-gradient(#f9ecee 0 2.500px, #d98a9a 2.500px 5px);
}
.us-first { background-position: 0 -5px, 0 24px, 17px 8px, 0 0; }
.ru { background: linear-gradient(#fff 33.300%, #0c44b0 33.300% 66.600%, #e22a12 66.600%); }
.jp { background: radial-gradient(circle 9.500px at 22.500px 15.500px, #c4102e 97%, #fff 100%); }
.eu { height: 30.670px; background: #2b4a9a; }
.cn { height: 31.250px; background: #e1300f; }

.bars { flex: 1; min-width: 0; display: flex; flex-direction: column; }
.sv {
  flex: none; position: relative; display: flex;
  border: 2px solid #bcb8b8; border-right: 0;
}
.sv::after {
  content: ""; position: absolute; inset: 0;
  background: repeating-linear-gradient(90deg, transparent 0 206.500px, #bcb8b8 206.500px 208.500px);
}
.run {
  display: block; flex: none; width: calc(var(--n, 1) * 208.500px);
  background: linear-gradient(#000 var(--s), #bcb8b8 var(--s) calc(var(--s) + 2px), var(--c) calc(var(--s) + 2px));
}
.run:last-child { flex: 1; }
.g { --c: #00bd00; }
.b { --c: #0000bd; }
.k { background: #000; }

/* console */
.console { flex: 1; min-height: 0; margin-left: 9px; display: flex; flex-direction: column; border-left: 4px solid #3c3c3c; }
.console-title {
  flex: none; height: 68px; padding: 14px 0 0 23px;
  display: flex; align-items: center; gap: 15px;
  font-size: 26px; letter-spacing: -.4px; color: #111;
  background: linear-gradient(#96b1cf, #b5cde6);
}
.tag { width: 31px; height: 35px; flex: none; }
.console-body { flex: 1; min-height: 0; padding-left: 19px; background: #c6daee; }
.log { height: 100%; background: #fff; border-left: 2px solid #888; border-top: 2px solid #707070; padding: 1.500px 0 0 2px; overflow: hidden; }
.ln {
  display: flex; height: 29.450px;
  font: 400 26px/29.450px "DejaVu Sans Mono", monospace; letter-spacing: 2.480px;
  white-space: nowrap; color: #111;
}
.ts { flex: none; width: 182px; }
.sel { background: #0078d7; color: #fff; }
```
